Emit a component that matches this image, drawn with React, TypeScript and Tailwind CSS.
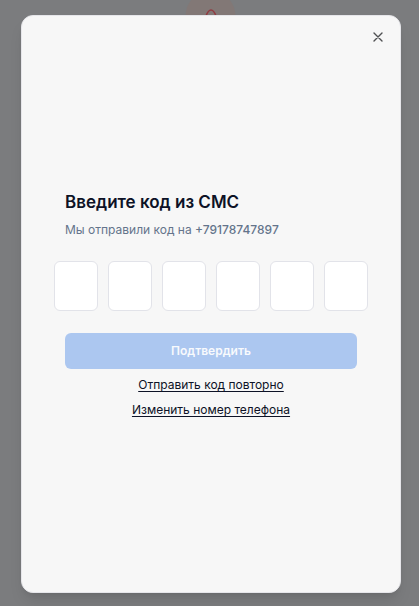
import { useRef, useState } from "react";

const CODE_LENGTH = 6;
const PHONE = "+79178747897";

export default function App() {
  const [code, setCode] = useState<string[]>(Array(CODE_LENGTH).fill(""));
  const inputs = useRef<(HTMLInputElement | null)[]>([]);

  const isComplete = code.every((digit) => digit !== "");

  function handleChange(index: number, value: string) {
    const digit = value.replace(/\D/g, "").slice(-1);
    setCode(code.map((item, i) => (i === index ? digit : item)));
    if (digit) {
      inputs.current[index + 1]?.focus();
    }
  }

  return (
    <div className="relative flex min-h-screen overflow-hidden bg-[#7b7c7e] pt-[15px] pr-[18px] pb-[13px] pl-[21px] font-['Inter',sans-serif] text-[#0d1226]">
      {/* page logo behind the overlay */}
      <svg
        className="absolute -top-3 left-1/2 size-14 -translate-x-1/2"
        viewBox="0 0 56 56"
        fill="none"
        aria-hidden="true"
      >
        <circle cx="28.5" cy="28" r="25" fill="#827876" />
        <path
          d="M24 28C25.500 24 26.500 22 29 22C31.500 22 32.500 24 34 28"
          stroke="#923a40"
          strokeWidth="1.6"
        />
      </svg>

      <div
        role="dialog"
        aria-labelledby="sms-title"
        className="relative flex flex-1 flex-col items-center justify-center rounded-xl border border-[#e6e6ea] bg-[#f7f7f7] pt-[2px] shadow-lg"
      >
        <button
          type="button"
          aria-label="Закрыть"
          className="absolute top-[13px] right-[14px] text-[#505153]"
        >
          <svg
            className="size-4"
            viewBox="0 0 16 16"
            fill="none"
            stroke="currentColor"
            strokeWidth="1.4"
            strokeLinecap="round"
          >
            <path d="M4 4l8 8M12 4l-8 8" />
          </svg>
        </button>

        <form
          className="flex w-full flex-col items-center"
          onSubmit={(e) => e.preventDefault()}
        >
          <div className="w-full px-[43px]">
            <h2 id="sms-title" className="text-[17px] leading-7 font-semibold">
              Введите код из СМС
            </h2>
            <p className="text-xs leading-7 text-[#64748b]">
              Мы отправили код на{" "}
              <span className="font-medium">{PHONE}</span>
            </p>
          </div>

          <div className="mt-[17px] flex gap-[10px]">
            {code.map((digit, index) => (
              <input
                key={index}
                ref={(el) => {
                  inputs.current[index] = el;
                }}
                type="text"
                inputMode="numeric"
                aria-label={`Цифра ${index + 1}`}
                value={digit}
                onChange={(e) => handleChange(index, e.target.value)}
                className="h-[50px] w-11 rounded-md border border-[#e2e3e9] bg-white text-center text-lg outline-none"
              />
            ))}
          </div>

          <div className="mt-[22px] w-full px-[43px]">
            <button
              type="submit"
              disabled={!isComplete}
              className="h-9 w-full rounded-md bg-[#3b82f6] text-xs font-semibold text-white disabled:bg-[#acc7f0] disabled:text-[#f8fafd]"
            >
              Подтвердить
            </button>
          </div>

          <div className="mt-[3px] flex flex-col items-center text-xs leading-[25px]">
            <button type="button" className="underline underline-offset-2">
              Отправить код повторно
            </button>
            <button type="button" className="underline underline-offset-2">
              Изменить номер телефона
            </button>
          </div>
        </form>
      </div>
    </div>
  );
}
